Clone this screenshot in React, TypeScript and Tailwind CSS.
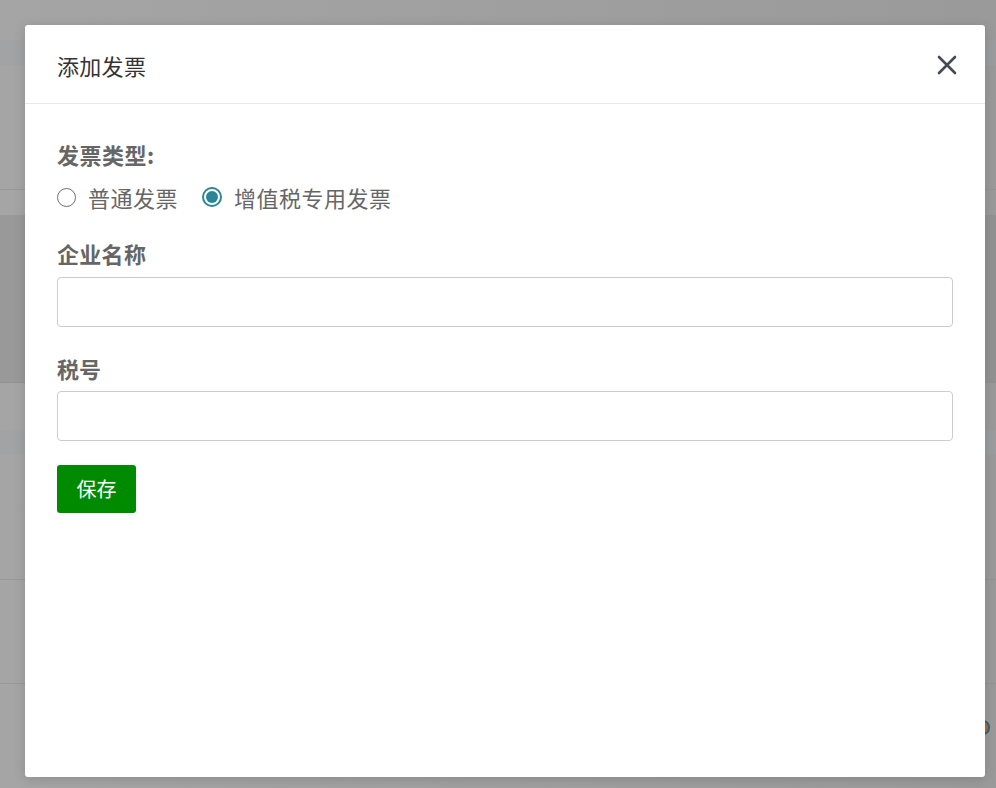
const cjk = { fontFamily: '"Noto Sans CJK SC", "Noto Sans", sans-serif' };

const Radio = ({ checked, label }: { checked?: boolean; label: string }) => (
  <label className="flex items-center gap-3 cursor-pointer">
    {checked ? (
      <span className="w-[20px] h-[20px] rounded-full border-2 border-[#2a8696] flex items-center justify-center">
        <span className="w-[12px] h-[12px] rounded-full bg-[#2a8696]" />
      </span>
    ) : (
      <span className="w-[19px] h-[19px] rounded-full border-[1.5px] border-[#6f6f6f]" />
    )}
    <span className="text-[22px] leading-[30px] text-[#666] tracking-[0.5px]">{label}</span>
  </label>
);

const Background = () => (
  <div className="w-full h-full bg-linear-to-r from-[#a5a5a5] to-[#9a9a9a]">
    <div className="h-[40px]" />
    <div className="h-[25px] bg-[#9aa0a6]/40" />
    <div className="h-[125px] border-b border-[#8f8f8f]/60" />
    <div className="h-[25px]" />
    <div className="h-[168px] bg-[#878787]/40 border-b border-[#8f8f8f]/60" />
    <div className="h-[47px]" />
    <div className="h-[25px] bg-[#9aa0a6]/40" />
    <div className="h-[125px] border-b border-[#8f8f8f]/60" />
    <div className="h-[104px] border-b border-[#8f8f8f]/60" />
    <div className="flex justify-end pr-[6px] pt-[36px]">
      <span className="w-[14px] h-[15px] rounded-full bg-[#a8702a] border-2 border-[#3c5f7c]" />
    </div>
  </div>
);

export default function App() {
  return (
    <div className="relative w-full h-[788px] overflow-hidden" style={cjk}>
      <Background />
      <div className="absolute left-[25px] top-[25px] w-[960px] h-[752px] bg-white rounded-[3px] shadow-[0_2px_12px_rgba(0,0,0,0.15)]">
        <div className="h-[79px] border-b border-[#e9e9e9] pl-8 pr-[28px] pt-[2px] flex items-center justify-between">
          <h2 className="text-[22px] leading-[30px] text-[#333] tracking-[0.3px]">添加发票</h2>
          <button className="text-[#454b55]">
            <svg width="20" height="20" viewBox="0 0 20 20" fill="none" stroke="currentColor" strokeWidth="2.6" strokeLinecap="round">
              <path d="M2 2 18 18M18 2 2 18" />
            </svg>
          </button>
        </div>
        <div className="px-8 pt-[35px]">
          <div className="text-[22px] leading-[30px] font-bold text-[#666] tracking-[0.5px]">发票类型:</div>
          <div className="flex items-center gap-[24px] mt-[13px]">
            <Radio label="普通发票" />
            <Radio checked label="增值税专用发票" />
          </div>
          <div className="mt-[26px] text-[22px] leading-[30px] font-bold text-[#666] tracking-[0.3px]">企业名称</div>
          <input className="mt-[9px] w-full h-[50px] border border-[#cccccc] rounded-[4px] px-3 outline-none" />
          <div className="mt-[26px] text-[22px] leading-[30px] font-bold text-[#666]">税号</div>
          <input className="mt-[8px] w-full h-[50px] border border-[#cccccc] rounded-[4px] px-3 outline-none" />
          <button className="mt-[24px] w-[79px] h-[48px] bg-[#008a00] text-white text-[20px] rounded-[3px]">
            保存
          </button>
        </div>
      </div>
    </div>
  );
}
